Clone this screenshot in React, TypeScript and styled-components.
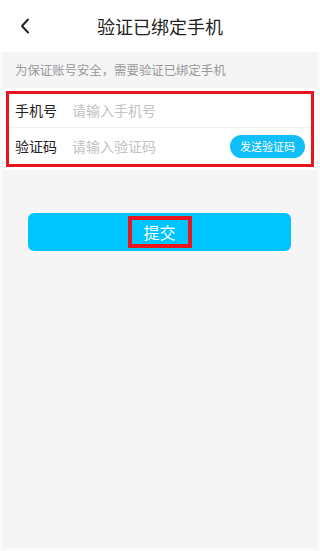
import styled, { createGlobalStyle } from "styled-components";

const GlobalStyle = createGlobalStyle`
  html, body {
    margin: 0;
    padding: 0;
    background: #ffffff;
  }
  body {
    font-family: "Noto Sans CJK SC", "Noto Sans", sans-serif;
  }
  * { box-sizing: border-box; }
`;

const Page = styled.div`
  width: 320px;
  height: 551px;
  display: flex;
  flex-direction: column;
  background: #f5f5f5;
  border-left: 2px solid #fbfbfb;
  border-right: 2px solid #fbfbfb;
  border-bottom: 3px solid #fbfbfb;
`;

const Header = styled.header`
  height: 52px;
  margin: 0 -2px;
  background: #ffffff;
  display: grid;
  grid-template-columns: 48px 1fr 48px;
  align-items: center;
`;

const BackButton = styled.button`
  border: none;
  background: none;
  padding: 0 0 0 20px;
  height: 100%;
  display: flex;
  align-items: center;
  cursor: pointer;
`;

const Title = styled.h1`
  margin: 0;
  text-align: center;
  font-size: 18px;
  font-weight: 400;
  color: #222;
`;

const Hint = styled.p`
  margin: 0;
  padding: 0 13px;
  height: 36px;
  line-height: 36px;
  font-size: 12.4px;
  color: #9a9a9a;
`;

const Card = styled.div`
  margin: 0 1px;
  background: #ffffff;
  padding: 3px 0;
`;

const Outline = styled.div`
  margin: 0 3px;
  border: 3px solid #e8141e;
`;

const Row = styled.div<{ $divider?: boolean }>`
  height: ${(p) => (p.$divider ? "34px" : "36px")};
  display: flex;
  align-items: center;
  padding: ${(p) => (p.$divider ? "0 6px 2px 6px" : "0 6px 0 6px")};
  border-bottom: ${(p) => (p.$divider ? "1px solid #f0f0f0" : "none")};
`;

const Label = styled.span`
  width: 57px;
  font-size: 14px;
  color: #222;
`;

const Input = styled.input`
  flex: 1;
  min-width: 0;
  border: none;
  outline: none;
  background: transparent;
  font-family: inherit;
  font-size: 14px;
  color: #333;
  padding: 0;
  &::placeholder {
    color: #c2c2c2;
  }
`;

const SendButton = styled.button`
  height: 23px;
  padding: 0 10px;
  border: none;
  border-radius: 12px;
  background: #10bef8;
  color: #ffffff;
  font-family: inherit;
  font-size: 11px;
  white-space: nowrap;
`;

const Actions = styled.div`
  padding: 43px 27px 0 26px;
`;

const SubmitButton = styled.button`
  width: 100%;
  height: 38px;
  border: none;
  border-radius: 6px;
  background: #00c4fe;
  display: flex;
  align-items: center;
  justify-content: center;
  padding: 0;
`;

const SubmitLabel = styled.span`
  width: 64px;
  height: 32px;
  border: 4px solid #e8141e;
  display: flex;
  align-items: center;
  justify-content: center;
  color: #ffffff;
  font-family: "Noto Sans CJK SC", sans-serif;
  font-size: 16px;
  margin-top: -1px;
`;

export default function App() {
  return (
    <>
      <GlobalStyle />
      <Page>
        <Header>
          <BackButton aria-label="back">
            <svg width="10" height="16" viewBox="0 0 10 16">
              <path
                d="M8 1.5 L2 8 L8 14.5"
                fill="none"
                stroke="#222"
                strokeWidth="2"
                strokeLinecap="round"
                strokeLinejoin="round"
              />
            </svg>
          </BackButton>
          <Title>验证已绑定手机</Title>
          <span />
        </Header>
        <Hint>为保证账号安全，需要验证已绑定手机</Hint>
        <Card>
          <Outline>
            <Row $divider>
              <Label>手机号</Label>
              <Input placeholder="请输入手机号" />
            </Row>
            <Row>
              <Label>验证码</Label>
              <Input placeholder="请输入验证码" />
              <SendButton>发送验证码</SendButton>
            </Row>
          </Outline>
        </Card>
        <Actions>
          <SubmitButton>
            <SubmitLabel>提交</SubmitLabel>
          </SubmitButton>
        </Actions>
      </Page>
    </>
  );
}
